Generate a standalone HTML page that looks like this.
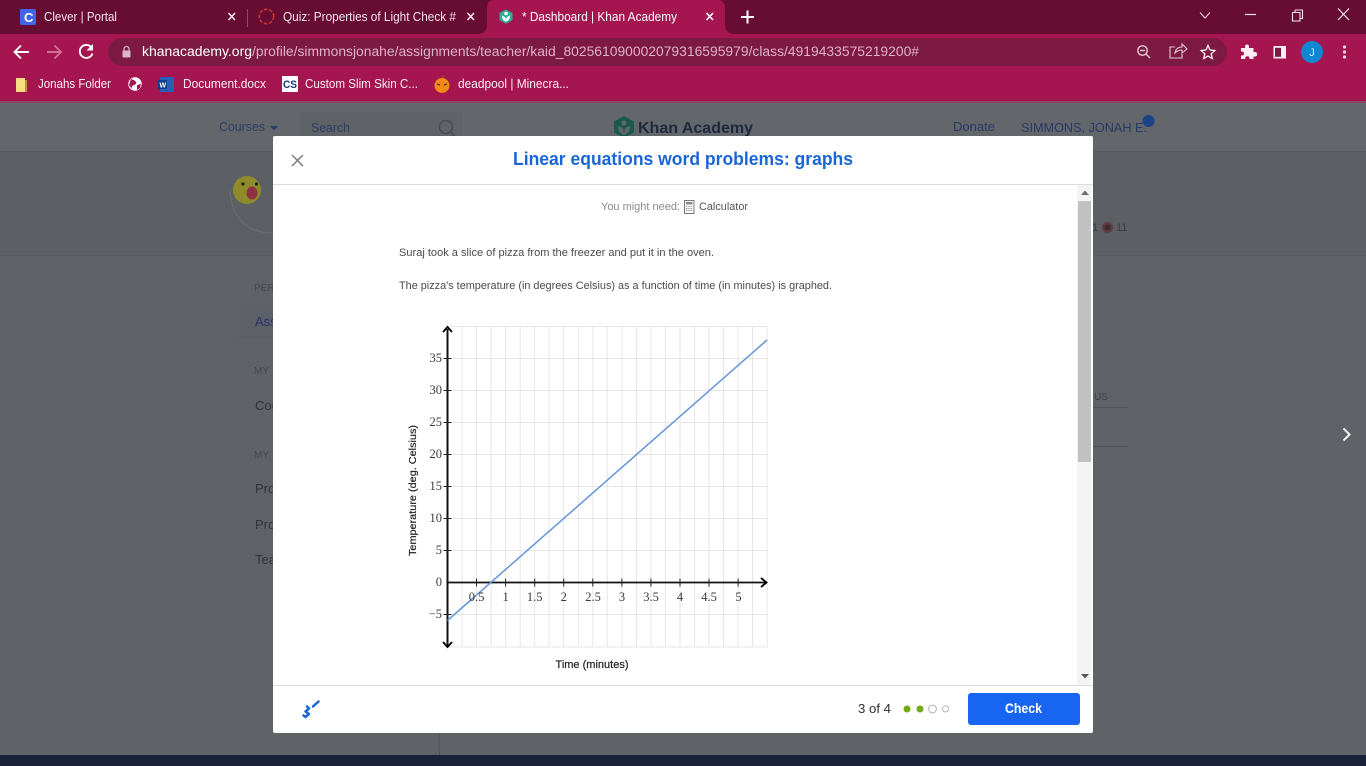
<!DOCTYPE html>
<html lang="en"><head><meta charset="utf-8"><title>Dashboard | Khan Academy</title>
<style>
html,body{margin:0;padding:0;width:1366px;height:766px;overflow:hidden;background:#5f6267}
svg{display:block;position:absolute;left:0;top:0}
text{font-family:"Liberation Sans",sans-serif;white-space:pre}
.tab{font-size:12.5px;fill:#f5e3ea}
.bm{font-size:12.5px;fill:#fbeef3}
.url{font-size:13.5px}
.s{font-family:"Liberation Serif",serif;font-size:12.5px;fill:#3a3a3a}
.bg{font-size:13px}
.p{font-size:11px;fill:#4a4a4a}
</style></head><body>
<svg width="1366" height="766" viewBox="0 0 1366 766" xmlns="http://www.w3.org/2000/svg">
<!-- chrome -->
<rect width="1366" height="34" fill="#670d33"/>
<rect y="34" width="1366" height="67" fill="#a5154f"/>
<rect y="101" width="1366" height="2" fill="#8a4a63"/>
<path d="M477 34q10 0 10-10V8q0-8 8-8h222q8 0 8 8v16q0 10 10 10z" fill="#a5154f"/>
<rect x="247" y="9" width="1" height="18" fill="#8d4a66"/>
<!-- tab 1 -->
<rect x="20" y="9" width="16" height="16" rx="2" fill="#4264e6"/>
<text x="24" y="22" font-weight="bold" fill="#fff" style="font-size:13px">C</text>
<text class="tab" x="44" y="21" textLength="73" lengthAdjust="spacingAndGlyphs">Clever | Portal</text>
<path d="M228.500 13l6.500 7M235 13l-6.500 7" stroke="#f5e3ea" stroke-width="1.600"/>
<!-- tab 2 -->
<circle cx="266.500" cy="16.500" r="7.200" fill="none" stroke="#d0352f" stroke-width="1.600" stroke-dasharray="3.500 1.700"/>
<text class="tab" x="283" y="21" textLength="173" lengthAdjust="spacingAndGlyphs">Quiz: Properties of Light Check #</text>
<path d="M467.500 13l6.500 7M474 13l-6.500 7" stroke="#f5e3ea" stroke-width="1.600"/>
<!-- tab 3 -->
<path d="M506 9.500l6.500 3.500v7l-6.500 3.800-6.500-3.800v-7z" fill="#2fae93"/>
<circle cx="506" cy="13.500" r="1.800" fill="#fff"/><path d="M502 15.500q4 1 4 5q0-4 4-5q0 5-4 6q-4-1-4-6z" fill="#fff"/>
<text class="tab" x="522" y="21" textLength="155" lengthAdjust="spacingAndGlyphs" style="fill:#fff">* Dashboard | Khan Academy</text>
<path d="M706.500 13l6.500 7M713 13l-6.500 7" stroke="#fff" stroke-width="1.600"/>
<path d="M747.500 10.500v13M741 17h13" stroke="#fff" stroke-width="2"/>
<!-- window controls -->
<path d="M1200 12.500l5 5.500 5-5.500" fill="none" stroke="#e8d0da" stroke-width="1.100"/>
<path d="M1245 14.500h11" stroke="#f5e3ea" stroke-width="1.200"/>
<path d="M1292.500 12.500h7.500v8.500h-7.500z" fill="none" stroke="#f5e3ea" stroke-width="1.100"/>
<path d="M1295 10h7.500v8.500h-2.500M1295 10v2.500" fill="none" stroke="#f5e3ea" stroke-width="1.100"/>
<path d="M1338 8.500l11 11.500M1349 8.500l-11 11.500" stroke="#f5e3ea" stroke-width="1.200"/>
<!-- toolbar -->
<path d="M29 52H15M21 45.500l-6.500 6.500 6.500 6.500" fill="none" stroke="#fff" stroke-width="1.900"/>
<path d="M61 52H47M54.500 45.500l6.500 6.500-6.500 6.500" fill="none" stroke="#cf6f93" stroke-width="1.900"/>
<path d="M91.500 47.500a6.500 6.500 0 1 0 1 6" fill="none" stroke="#fff" stroke-width="1.900"/><path d="M93 44v6.500h-6.500z" fill="#fff"/>
<rect x="108" y="38" width="1119" height="28" rx="14" fill="#7d1a42"/>
<rect x="122.500" y="50.500" width="8" height="7" rx="1" fill="#d9b7c6"/><path d="M124 51v-2a2.500 2.500 0 0 1 5 0v2" fill="none" stroke="#d9b7c6" stroke-width="1.200"/>
<text class="url" x="142" y="56" textLength="110" lengthAdjust="spacingAndGlyphs" fill="#fff">khanacademy.org</text>
<text class="url" x="252" y="56" textLength="667" lengthAdjust="spacingAndGlyphs" fill="#dfb2c5">/profile/simmonsjonahe/assignments/teacher/kaid_802561090002079316595979/class/4919433575219200#</text>
<circle cx="1142.500" cy="50.500" r="4.700" fill="none" stroke="#e5c8d4" stroke-width="1.400"/><path d="M1146 54l4 4M1140 50.500h5" stroke="#e5c8d4" stroke-width="1.400"/>
<path d="M1175 47h-5v11h12v-4M1175 53q1-6 7-6v-3l5 5-5 4v-3q-4 0-7 3z" fill="none" stroke="#e5c8d4" stroke-width="1.100"/>
<path d="M1208 45.500l2 4.500 4.800.5-3.600 3.200 1.100 4.800-4.300-2.500-4.300 2.500 1.100-4.800-3.600-3.200 4.800-.5z" fill="none" stroke="#f5e3ea" stroke-width="1.400"/>
<path d="M1241 48h4v-1.500a2 2 0 0 1 4 0V48h4.500v4h1.500a2.200 2.200 0 0 1 0 4.500h-1.500V59h-4v-1a2.200 2.200 0 0 0-4.300 0v1H1241v-3.500h1a2 2 0 0 0 0-4h-1z" fill="#fbeef3"/>
<rect x="1273.500" y="46" width="12.500" height="12.500" fill="#fbeef3"/><rect x="1275" y="47.800" width="6" height="9" fill="#7d1a42"/>
<circle cx="1312" cy="52" r="11" fill="#0f86d2"/>
<text x="1312" y="56" text-anchor="middle" fill="#e6f3fb" style="font-size:11px">J</text>
<circle cx="1344.500" cy="47" r="1.600" fill="#f0d6e0"/><circle cx="1344.500" cy="52" r="1.600" fill="#f0d6e0"/><circle cx="1344.500" cy="57" r="1.600" fill="#f0d6e0"/>
<!-- bookmarks -->
<rect x="16" y="78" width="9" height="14" fill="#f8dc83"/><rect x="25" y="80" width="2" height="12" fill="#c98a3a"/>
<text class="bm" x="38" y="88" textLength="73" lengthAdjust="spacingAndGlyphs">Jonahs Folder</text>
<circle cx="135" cy="84" r="6.700" fill="#fff"/><path d="M131 79q4 1 5 3t-2 3-2 4l-3-4zM137 85l4-1-1 4-3 2z" fill="#a5154f"/>
<rect x="160" y="77" width="14" height="15" rx="1" fill="#2b5eb8"/><rect x="158" y="80" width="9" height="9" fill="#123f8f"/>
<text x="159.500" y="87.500" font-weight="bold" fill="#fff" style="font-size:7px">W</text>
<text class="bm" x="183" y="88" textLength="83" lengthAdjust="spacingAndGlyphs">Document.docx</text>
<rect x="282" y="76" width="16" height="16" fill="#fff"/>
<text x="283" y="88" font-weight="bold" fill="#123a70" style="font-size:11px" textLength="14" lengthAdjust="spacingAndGlyphs">CS</text>
<text class="bm" x="305" y="88" textLength="113" lengthAdjust="spacingAndGlyphs">Custom Slim Skin C...</text>
<circle cx="442" cy="85.500" r="7.500" fill="#f18a17"/><path d="M442 78l1-2 1 2" stroke="#9c5a10" fill="none"/><path d="M437 84l3 1M444 85l3-1" stroke="#5b2a05" stroke-width="1.200"/>
<text class="bm" x="458" y="88" textLength="111" lengthAdjust="spacingAndGlyphs">deadpool | Minecra...</text>
<!-- dim page -->
<rect y="103" width="1366" height="652" fill="#5f6267"/>
<rect y="103" width="1366" height="48" fill="#63666b"/>
<rect y="151" width="1366" height="1" fill="#56595e"/>
<rect y="152" width="1366" height="103" fill="#5c5f64"/>
<rect y="255" width="1366" height="1" fill="#585b60"/>
<rect y="755" width="1366" height="11" fill="#192239"/>
<rect x="439" y="733" width="1" height="22" fill="#505358"/>
<text class="bg" x="219" y="131" textLength="46" lengthAdjust="spacingAndGlyphs" fill="#2c3f66">Courses</text>
<path d="M270 126h8l-4 4.500z" fill="#2c3f66"/>
<rect x="300" y="112" width="162" height="24" fill="#5f6267"/>
<text class="bg" x="311" y="132" textLength="39" lengthAdjust="spacingAndGlyphs" fill="#2c3f66">Search</text>
<circle cx="446" cy="127" r="6.500" fill="none" stroke="#46494e" stroke-width="1.300"/><path d="M451 132l3 4" stroke="#46494e" stroke-width="1.300"/>
<path d="M624 116l10 5.500v11l-10 5.500-10-5.500v-11z" fill="#1a5a4a"/><circle cx="624" cy="123" r="2.500" fill="#63666b"/><path d="M618 126q6 1 6 7q0-6 6-7q0 7-6 9q-6-2-6-9z" fill="#63666b"/>
<text x="638" y="133" font-weight="bold" fill="#1e2a3d" style="font-size:16px" textLength="115" lengthAdjust="spacingAndGlyphs">Khan Academy</text>
<text class="bg" x="953" y="131" textLength="42" lengthAdjust="spacingAndGlyphs" fill="#2a3a66">Donate</text>
<text class="bg" x="1021" y="132" textLength="126" lengthAdjust="spacingAndGlyphs" fill="#2a3a66">SIMMONS, JONAH E.</text>
<circle cx="1148.500" cy="121" r="6" fill="#1b4387"/>
<path d="M230 190c1 25 15 43 43 43" fill="none" stroke="#6a6d72" stroke-width="1.200"/>
<circle cx="247" cy="190" r="14" fill="#8f8b2a"/><circle cx="243" cy="184" r="1.600" fill="#222"/><circle cx="256.500" cy="184" r="1.600" fill="#222"/><ellipse cx="252" cy="193" rx="5.500" ry="6.500" fill="#8f3045"/>
<text x="1092" y="231" fill="#3a3c40" style="font-size:11px">1</text><circle cx="1107.500" cy="227.500" r="5.500" fill="#5f3a40"/><circle cx="1107.500" cy="227.500" r="3" fill="#3f2a2e"/><text x="1116" y="231" fill="#3a3c40" style="font-size:11px">11</text>
<text x="1088" y="400" fill="#404348" style="font-size:10px">TUS</text>
<path d="M1090 407.500h38M1090 446.500h38" stroke="#505358"/>
<path d="M1343.500 428.500l6 6-6 6" fill="none" stroke="#fff" stroke-width="1.900"/>
<rect x="236" y="305" width="37" height="33" fill="#5d6066"/>
<text x="254" y="291" fill="#45484d" style="font-size:10px">PER</text>
<text x="255" y="326" fill="#26336a" style="font-size:13px">Ass</text>
<text x="254" y="374" fill="#45484d" style="font-size:10px">MY</text>
<text x="255" y="410" fill="#303337" style="font-size:13px">Cou</text>
<text x="254" y="458" fill="#45484d" style="font-size:10px">MY</text>
<text x="255" y="493" fill="#303337" style="font-size:13px">Pro</text>
<text x="255" y="529" fill="#303337" style="font-size:13px">Pro</text>
<text x="255" y="564" fill="#303337" style="font-size:13px">Tea</text>
<!-- modal -->
<rect x="273" y="136" width="820" height="597" rx="2" fill="#fff"/>
<rect x="273" y="184" width="820" height="1" fill="#dcdcdc"/>
<rect x="273" y="685" width="820" height="1" fill="#dcdcdc"/>
<path d="M292 155l11 11M303 155l-11 11" stroke="#777" stroke-width="1.400"/>
<text x="513" y="165" font-weight="bold" fill="#1b66d6" style="font-size:18px" textLength="340" lengthAdjust="spacingAndGlyphs">Linear equations word problems: graphs</text>
<!-- scrollbar -->
<rect x="1077" y="185" width="14" height="500" fill="#f4f4f4"/>
<rect x="1078" y="201" width="13" height="261" fill="#c1c1c1"/>
<path d="M1081 195h8l-4-4.500z" fill="#6e6e6e"/><path d="M1081 674h8l-4 4.500z" fill="#555"/>
<!-- content -->
<text x="601" y="210" fill="#8a8a8a" style="font-size:11px" textLength="79" lengthAdjust="spacingAndGlyphs">You might need:</text>
<rect x="684.500" y="200.500" width="9.500" height="13" fill="#fff" stroke="#777"/>
<rect x="686" y="202" width="6.500" height="2.500" fill="#888"/>
<path d="M686 206.500h6.500M686 208.500h6.500M686 210.500h6.500" stroke="#888" stroke-dasharray="1.300 1"/>
<text x="699" y="210" fill="#555" style="font-size:11px" textLength="49" lengthAdjust="spacingAndGlyphs">Calculator</text>
<text class="p" x="399" y="256" textLength="315" lengthAdjust="spacingAndGlyphs">Suraj took a slice of pizza from the freezer and put it in the oven.</text>
<text class="p" x="399" y="289" textLength="433" lengthAdjust="spacingAndGlyphs">The pizza's temperature (in degrees Celsius) as a function of time (in minutes) is graphed.</text>
<!-- graph -->
<path d="M462 327V647M476.500 327V647M491 327V647M505.600 327V647M520.200 327V647M534.700 327V647M549.200 327V647M563.700 327V647M578.300 327V647M592.800 327V647M607.300 327V647M621.900 327V647M636.400 327V647M650.900 327V647M665.500 327V647M680 327V647M694.500 327V647M709 327V647M723.600 327V647M738.100 327V647M752.600 327V647M767.200 327V647" stroke="#e6e6e6" stroke-width="1"/>
<path d="M447 326.500H767.500M447 358.500H767M447 390.500H767M447 422.500H767M447 454.500H767M447 486.500H767M447 518.500H767M447 550.500H767M447 614.500H767M447 647H767.500" stroke="#e6e6e6" stroke-width="1"/>
<path d="M447.500 329V646" stroke="#111" stroke-width="2"/>
<path d="M447.500 582.500H766" stroke="#111" stroke-width="1.700"/>
<path d="M443 332l4.500-5 4.500 5M443 642l4.500 5 4.500-5M761 578l5.500 4.500-5.500 4.500" fill="none" stroke="#000" stroke-width="1.800"/>
<path d="M476.500 578.500v8M505.600 578.500v8M534.700 578.500v8M563.700 578.500v8M592.800 578.500v8M621.900 578.500v8M650.900 578.500v8M680 578.500v8M709 578.500v8M738.100 578.500v8M443.500 358.500h8M443.500 390.500h8M443.500 422.500h8M443.500 454.500h8M443.500 486.500h8M443.500 518.500h8M443.500 550.500h8M443.500 614.500h8" stroke="#222" stroke-width="1"/>
<path d="M447.500 620.500L767 340" stroke="#6495d8" stroke-width="1.500" fill="none"/>
<g text-anchor="end">
<text class="s" x="442" y="362">35</text><text class="s" x="442" y="394">30</text><text class="s" x="442" y="426">25</text><text class="s" x="442" y="458">20</text><text class="s" x="442" y="490">15</text><text class="s" x="442" y="522">10</text><text class="s" x="442" y="554">5</text><text class="s" x="442" y="586">0</text><text class="s" x="442" y="618">−5</text>
</g>
<g text-anchor="middle">
<text class="s" x="476.500" y="601">0.5</text><text class="s" x="505.600" y="601">1</text><text class="s" x="534.700" y="601">1.5</text><text class="s" x="563.700" y="601">2</text><text class="s" x="593" y="601">2.5</text><text class="s" x="622" y="601">3</text><text class="s" x="651" y="601">3.5</text><text class="s" x="680" y="601">4</text><text class="s" x="709" y="601">4.5</text><text class="s" x="738.500" y="601">5</text>
</g>
<text x="0" y="0" transform="translate(416 556) rotate(-90)" fill="#222" style="font-size:10.500px" stroke="#222" stroke-width=".2" textLength="131" lengthAdjust="spacingAndGlyphs">Temperature (deg. Celsius)</text>
<text x="555.500" y="668" fill="#222" style="font-size:11px" stroke="#222" stroke-width=".2" textLength="73" lengthAdjust="spacingAndGlyphs">Time (minutes)</text>
<!-- footer -->
<path d="M303.500 715.500l2 1.500 3.500-3-3.500-2.500 3.500-3-2-2" fill="none" stroke="#1b66d6" stroke-width="2.500" stroke-linecap="round" stroke-linejoin="round"/>
<path d="M313 706.500l5.500-5" stroke="#1b66d6" stroke-width="2.500" stroke-linecap="round"/>
<text x="858" y="713" fill="#2f2f2f" style="font-size:13px" textLength="33" lengthAdjust="spacingAndGlyphs">3 of 4</text>
<circle cx="907" cy="709" r="3.500" fill="#71a816"/><circle cx="920" cy="709" r="3.500" fill="#71a816"/>
<circle cx="932.500" cy="709" r="3.900" fill="#fff" stroke="#b5b5b5"/><circle cx="945.500" cy="709" r="3" fill="#fff" stroke="#b5b5b5"/>
<rect x="968" y="693" width="112" height="32" rx="3" fill="#1865f2"/>
<text x="1005" y="713" font-weight="bold" fill="#fff" style="font-size:13.500px" textLength="37" lengthAdjust="spacingAndGlyphs">Check</text>
</svg>
</body></html>
